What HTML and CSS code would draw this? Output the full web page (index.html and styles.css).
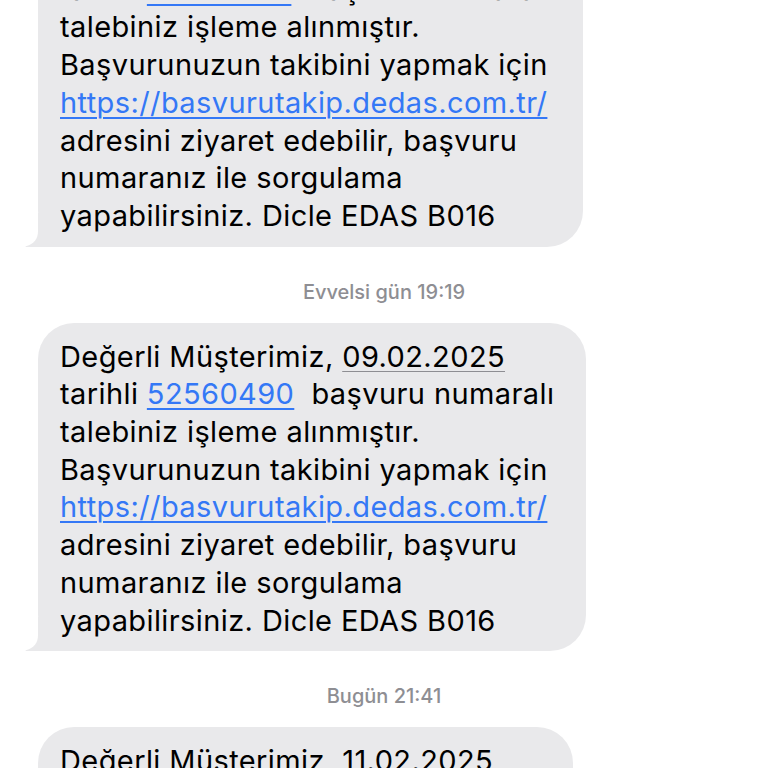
FILE: index.html
```html
<!DOCTYPE html>
<html lang="tr">
<head>
<meta charset="utf-8">
<title>Mesajlar</title>
<link rel="stylesheet" href="styles.css">
</head>
<body>
<main class="thread">
  <div class="bubble first">
    <p class="msg">Değerli Müşterimiz, <span class="date">07.02.2025</span><br>tarihli <a class="link">52560267</a>&nbsp; başvuru numaralı<br>talebiniz işleme alınmıştır.<br>Başvurunuzun takibini yapmak için<br><a class="link">https://basvurutakip.dedas.com.tr/</a><br>adresini ziyaret edebilir, başvuru<br>numaranız ile sorgulama<br>yapabilirsiniz. Dicle EDAS B016</p>
    <svg class="tail" viewBox="0 0 50 34" width="50" height="34" aria-hidden="true"><path d="M13 0 L13 18 C13 26 9 31 1 33.3 C0 33.6 0.5 34 1.5 34 L50 34 L50 0 Z"/></svg>
  </div>
  <div class="stamp">Evvelsi gün 19:19</div>
  <div class="bubble">
    <p class="msg">Değerli Müşterimiz, <span class="date">09.02.2025</span><br>tarihli <a class="link">52560490</a>&nbsp; başvuru numaralı<br>talebiniz işleme alınmıştır.<br>Başvurunuzun takibini yapmak için<br><a class="link">https://basvurutakip.dedas.com.tr/</a><br>adresini ziyaret edebilir, başvuru<br>numaranız ile sorgulama<br>yapabilirsiniz. Dicle EDAS B016</p>
    <svg class="tail" viewBox="0 0 50 34" width="50" height="34" aria-hidden="true"><path d="M13 0 L13 18 C13 26 9 31 1 33.3 C0 33.6 0.5 34 1.5 34 L50 34 L50 0 Z"/></svg>
  </div>
  <div class="stamp">Bugün 21:41</div>
  <div class="bubble">
    <p class="msg">Değerli Müşterimiz, <span class="date">11.02.2025</span><br>tarihli <a class="link">52560811</a>&nbsp; başvuru numaralı<br>talebiniz işleme alınmıştır.</p>
  </div>
</main>
</body>
</html>
```
FILE: styles.css
```css
html, body {
  margin: 0;
  padding: 0;
  background: #ffffff;
}
body {
  font-family: Inter, "Noto Sans", "Liberation Sans", sans-serif;
  overflow: hidden;
  height: 768px;
}
.thread {
  display: flex;
  flex-direction: column;
  align-items: flex-start;
  padding-left: 38px;
}
.bubble {
  position: relative;
  background: #e9e9eb;
  border-radius: 36px;
  padding: 15px 32px 12px 22px;
}
.bubble.first {
  margin-top: -82px;
}
.tail {
  position: absolute;
  left: -13px;
  bottom: 0;
  display: block;
  fill: #e9e9eb;
}
.msg {
  position: relative;
  z-index: 1;
  margin: 0;
  font-size: 29px;
  line-height: 37.7px;
  color: #000000;
  white-space: nowrap;
  letter-spacing: 0.4px;
}
.date {
  text-decoration: underline;
  text-decoration-color: #8e8e93;
  text-decoration-thickness: 1px;
  text-underline-offset: 4px;
}
.link {
  color: #3478f6;
  text-decoration: underline;
  text-decoration-thickness: 1.5px;
  text-underline-offset: 4px;
}
.stamp {
  align-self: center;
  margin-left: -38px;
  padding: 33px 0 19px;
  font-size: 20px;
  line-height: 24px;
  font-weight: 500;
  color: #8e8e93;
}
```
